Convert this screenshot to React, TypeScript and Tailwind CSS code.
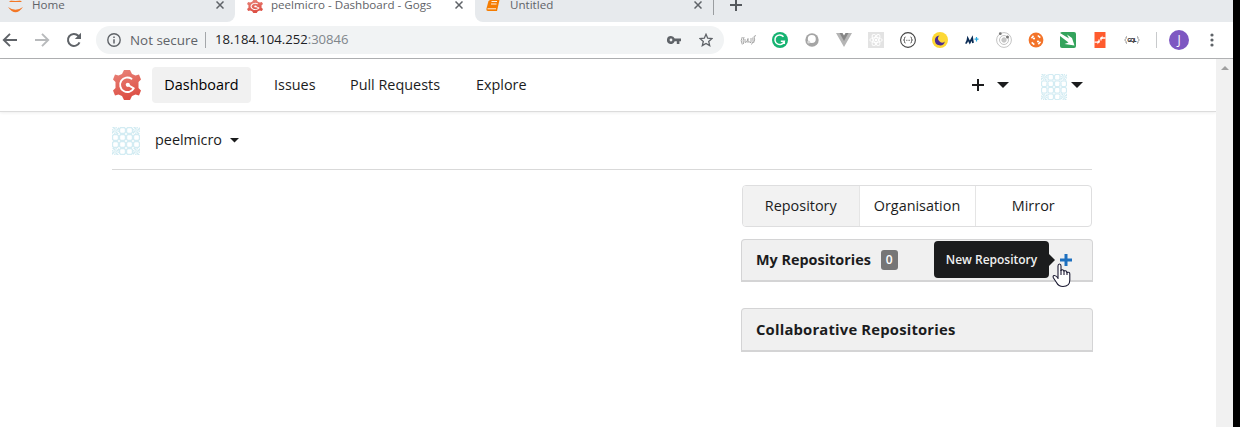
import React from "react";

const stroke = { fill: "none", stroke: "currentColor" } as const;

function Close() {
  return (
    <svg width="8" height="8" viewBox="0 0 8 8" className="shrink-0 text-[#5f6368]">
      <path d="M0.5 0.5L7.5 7.5M7.5 0.5L0.5 7.5" {...stroke} strokeWidth="1.5" />
    </svg>
  );
}

const GEAR =
  "M11 0H17L19 4L22.500 5.500L26 4.500L28 9.500L25.500 12V18L28 20.500L26 25.500L22.500 24.500L19 26L17 30H11L9 26L5.500 24.500L2 25.500L0 20.500L2.500 18V12L0 9.500L2 4.500L5.500 5.500L9 4Z";

function Gogs({ width, height }: { width: number; height: number }) {
  return (
    <svg width={width} height={height} viewBox="0 0 28 30" preserveAspectRatio="none" className="shrink-0">
      <defs>
        <linearGradient id="gear" x1="0" y1="0" x2="0.3" y2="1">
          <stop offset="0" stopColor="#e9857b" />
          <stop offset="1" stopColor="#dd5045" />
        </linearGradient>
      </defs>
      <path d={GEAR} fill="url(#gear)" />
      <path d="M18.500 8.700A7.300 7.300 0 1 0 20.800 18.300L15 15" fill="none" stroke="#fff" strokeWidth="1.900" strokeLinecap="round" strokeLinejoin="round" />
      <circle cx="14.800" cy="14.800" r="2.100" fill="#fff" />
    </svg>
  );
}

function Identicon({ size }: { size: number }) {
  const cells = [0, 1, 2, 3];
  return (
    <svg width={size} height={size} viewBox="0 0 28 28" className="shrink-0">
      {cells.map((r) =>
        cells.map((c) => {
          const corner = (r === 0 || r === 3) && (c === 0 || c === 3);
          return (
            <g key={`${r}-${c}`} transform={`translate(${c * 7} ${r * 7})`}>
              {corner ? (
                <path d="M0 0H2.500L3.500 3.500ZM7 0V2.500L3.500 3.500ZM7 7H4.500L3.500 3.500ZM0 7V4.500L3.500 3.500ZM3.500 0H5L3.500 3.500ZM7 3.500V5L3.500 3.500ZM3.500 7H2L3.500 3.500ZM0 3.500V2L3.500 3.500Z" fill="#cfeaf1" />
              ) : (
                <>
                  <rect width="7" height="7" fill="#d3ecf3" />
                  <path d="M2 1.200H5L5.800 2V5L5 5.800H2L1.200 5V2Z" fill="#fff" />
                  <path d="M0 0H1.300L0 1.300ZM7 0V1.300L5.700 0ZM7 7H5.700L7 5.700ZM0 7V5.700L1.300 7Z" fill="#fff" />
                </>
              )}
            </g>
          );
        })
      )}
    </svg>
  );
}

function Caret({ width = 12 }: { width?: number }) {
  return (
    <svg width={width} height={width / 2} viewBox="0 0 12 6" className="shrink-0">
      <path d="M0 0H12L6 6Z" fill="#1b1c1d" />
    </svg>
  );
}

function Toolbar() {
  return (
    <div className="flex h-9 items-center bg-white text-[#5f6368]">
      <svg width="18" height="16" viewBox="0 0 18 16" className="shrink-0">
        <path d="M17 8H4M10 1.800L3.800 8L10 14.200" {...stroke} strokeWidth="1.900" />
      </svg>
      <svg width="16" height="16" viewBox="0 0 16 16" className="ml-[16px] shrink-0 text-[#b8babc]">
        <path d="M1 8H14M8 1.800L14.200 8L8 14.200" {...stroke} strokeWidth="1.900" />
      </svg>
      <svg width="16" height="16" viewBox="0 0 16 16" className="ml-4 shrink-0">
        <path d="M13.500 10.300A6 6 0 1 1 12.300 3.800L14 5.500" {...stroke} strokeWidth="2" />
        <path d="M15 0.800V7H8.800Z" fill="currentColor" />
      </svg>
      <div className="ml-[14px] flex h-7 w-[628px] shrink-0 items-center rounded-full bg-[#f1f3f4] pl-[11px] pr-[11px]">
        <svg width="14" height="14" viewBox="0 0 14 14" className="shrink-0">
          <circle cx="7" cy="7" r="6.200" {...stroke} strokeWidth="1.400" />
          <path d="M7 6.200V10.500M7 3.500V5" {...stroke} strokeWidth="1.500" />
        </svg>
        <span className="ml-[9px] w-[75px] text-[13.400px]">Not secure</span>
        <span className="h-4 w-px bg-[#a4a7aa]" />
        <span className="ml-[9px] text-[13.100px] text-[#202124]">18.184.104.252</span>
        <span className="text-[13.100px] text-[#80868b]">:30846</span>
        <svg width="14" height="8" viewBox="0 0 14 8" className="ml-auto">
          <path d="M4 0A4 4 0 1 0 7.700 5.300H9.800V8H12.400V5.300H14V2.600H7.700A4 4 0 0 0 4 0ZM4 2.600A1.400 1.400 0 1 1 4 5.400A1.400 1.400 0 1 1 4 2.600Z" fill="currentColor" fillRule="evenodd" />
        </svg>
        <svg width="14" height="14" viewBox="0 0 14 14" className="ml-[18px]">
          <path d="M7 1.300L8.700 5.200L13 5.600L9.700 8.400L10.700 12.600L7 10.400L3.300 12.600L4.300 8.400L1 5.600L5.300 5.200Z" {...stroke} strokeWidth="1.300" />
        </svg>
      </div>
      <div className="ml-4 flex shrink-0 items-center gap-4">
        <svg width="16" height="16" viewBox="0 0 16 16">
          <path d="M2.300 5Q0 8.500 2.300 12.500M4 5Q2.500 8.500 3.500 12M5 7V10.500L7 9.500L8 6.500V10.500L9.500 9M11 6V10.500H9.500M11.500 12.500Q14 10 12.800 5.500M13.500 11Q15.500 8 14 4.500L16 3.500" fill="none" stroke="#9d9d9d" strokeWidth="0.900" />
        </svg>
        <svg width="16" height="16" viewBox="0 0 16 16">
          <circle cx="8" cy="8" r="8" fill="#15b371" />
          <path d="M11.500 4.700A4.800 4.800 0 1 0 12.300 9.300H8.800M12.300 9.300V12" fill="none" stroke="#fff" strokeWidth="1.500" />
        </svg>
        <svg width="16" height="16" viewBox="0 0 16 16">
          <circle cx="8" cy="8" r="6.700" fill="#a5a5a5" />
          <circle cx="7.800" cy="7" r="4" fill="#fff" />
          <circle cx="4.700" cy="10" r="1.500" fill="#d8d8d8" />
        </svg>
        <svg width="16" height="16" viewBox="0 0 16 16">
          <path d="M0 1H4L8 8L12 1H16L8 15Z" fill="#b5b5b5" />
          <path d="M3.500 1H6.500L8 3.500L9.500 1H12.500L8 9Z" fill="#858585" />
        </svg>
        <svg width="16" height="16" viewBox="0 0 16 16">
          <path d="M0 0H16V16H0Z" fill="#e3e3e3" />
          <g fill="none" stroke="#fff" strokeWidth="0.900">
            <ellipse cx="8" cy="8" rx="6.200" ry="2.500" />
            <ellipse cx="8" cy="8" rx="6.200" ry="2.500" transform="rotate(60 8 8)" />
            <ellipse cx="8" cy="8" rx="6.200" ry="2.500" transform="rotate(120 8 8)" />
          </g>
          <circle cx="8" cy="8" r="1.300" fill="#fff" />
        </svg>
        <svg width="16" height="16" viewBox="0 0 16 16" fill="none" stroke="#454545">
          <circle cx="8" cy="8" r="7.400" strokeWidth="1.100" />
          <path d="M5.500 5Q4.300 5 4.500 6.500T3.500 8Q4.700 8 4.500 9.500T5.500 11M10.500 5Q11.700 5 11.500 6.500T12.500 8Q11.300 8 11.500 9.500T10.500 11" strokeWidth="0.900" />
          <path d="M6.300 8.300H10" strokeWidth="0.900" strokeDasharray="0.800 0.600" />
        </svg>
        <svg width="16" height="16" viewBox="0 0 16 16">
          <circle cx="8" cy="8" r="8" fill="#fdd835" />
          <path d="M7.500 3.400A5 5 0 1 0 12.800 9.400A4 4 0 0 1 7.500 3.400Z" fill="#4a2b91" />
        </svg>
        <svg width="16" height="16" viewBox="0 0 16 16">
          <path d="M1.500 11Q3 11 3.800 6.500L5.800 10.500L8.200 6L9 11" fill="none" stroke="#0b2c55" strokeWidth="1.800" />
          <path d="M12.500 5V9.500M10.500 7.200H14.500" stroke="#28a9df" strokeWidth="1.200" />
        </svg>
        <svg width="16" height="16" viewBox="0 0 16 16" fill="none" stroke="#c3c3c3">
          <circle cx="8" cy="8" r="7.400" />
          <circle cx="8" cy="8" r="4.500" />
          <circle cx="8" cy="8" r="2.200" fill="#c7c7c7" />
          <circle cx="4.300" cy="1.700" r="1.400" fill="#777" stroke="none" />
          <circle cx="11.500" cy="5" r="1.500" fill="#777" stroke="none" />
        </svg>
        <svg width="16" height="16" viewBox="0 0 16 16">
          <circle cx="8" cy="8" r="7.400" fill="#f37329" />
          <path d="M3.500 6.300L5.500 3.700M9.800 3.500L12.300 5.700M12.500 9.800L10.300 12.300M6.300 12.600L3.700 10.300" stroke="#fff" strokeWidth="1.600" />
          <circle cx="6" cy="6.500" r="1.100" fill="#fff" />
          <circle cx="10" cy="9.500" r="1.100" fill="#fff" />
        </svg>
        <svg width="16" height="16" viewBox="0 0 16 16">
          <rect width="16" height="16" rx="2" fill="#34a35c" />
          <path d="M0 1L9 6.500L7 2.500L12 6L14.500 13.500L4.500 12L8.500 10.500L0 4Z" fill="#fff" />
        </svg>
        <svg width="16" height="16" viewBox="0 0 16 16">
          <path d="M2.500 0H13.500V16H2.500Z" fill="#ff5b2e" />
          <path d="M13.500 6H9V8.500M2.500 10.200H7V7.500" fill="none" stroke="#fff" strokeWidth="1.300" />
          <path d="M8 7L10.500 3.500V7ZM8 9L5.500 12.500V9Z" fill="#fff" />
        </svg>
        <svg width="16" height="16" viewBox="0 0 16 16">
          <path d="M3 4.500Q1.700 4.500 2 6.500L0.700 8L2 9.500Q1.700 11.500 3 11.500M13 4.500Q14.300 4.500 14 6.500L15.300 8L14 9.500Q14.300 11.500 13 11.500" fill="none" stroke="#888" strokeWidth="0.900" />
          <text x="3.200" y="10" fontSize="5.500" fontWeight="700" fontFamily="Open Sans, sans-serif" textLength="9.500" fill="#222">GQL</text>
        </svg>
      </div>
      <span className="ml-4 h-4 w-px shrink-0 bg-[#c8cacc]" />
      <span className="ml-3 flex h-5 w-5 shrink-0 items-center justify-center rounded-full bg-[#7e57c2] text-[12px] leading-none text-white">J</span>
      <svg width="4" height="14" viewBox="0 0 4 14" className="ml-[21px] shrink-0">
        <g fill="currentColor">
          <circle cx="2" cy="2" r="1.600" />
          <circle cx="2" cy="7" r="1.600" />
          <circle cx="2" cy="12" r="1.600" />
        </g>
      </svg>
    </div>
  );
}

function Tabs() {
  return (
    <div className="flex h-[22px] bg-white text-[11.600px] leading-[10px] text-[#5f6368]">
      <div className="flex w-[235px] shrink-0 items-start rounded-br-[8px] bg-[#e7eaed] pr-[11px]">
        <svg width="17" height="13" viewBox="0 0 17 13" className="ml-[7px]">
          <path d="M2 2Q8.500 -4 15 2M1 7Q8.500 17.500 16 7Q8.500 12.500 1 7" fill="#f37726" />
          <path d="M2 1Q8.500 -1 15 1" fill="#e7eaed" />
        </svg>
        <span className="ml-2 grow">Home</span>
        <span className="pt-px"><Close /></span>
      </div>
      <div className="flex w-[240px] shrink-0 items-start bg-white pr-[12px]">
        <span className="ml-3"><Gogs width={16} height={13} /></span>
        <span className="ml-2 grow whitespace-nowrap">peelmicro - Dashboard - Gogs</span>
        <span className="pt-px"><Close /></span>
      </div>
      <div className="flex grow items-start rounded-bl-[8px] bg-[#e7eaed]">
        <svg width="14" height="12" viewBox="0 0 14 12" className="ml-[11px]">
          <path d="M4 0H13.500L11 11H2Q0 11 0.500 8.500L2.500 1Z" fill="#f57c00" />
          <path d="M5.500 1.500H11M5 4H10.500M1.500 8.800H10" stroke="#fff" strokeWidth="0.900" />
        </svg>
        <span className="ml-[10px] w-[184px]">Untitled</span>
        <span className="pt-px"><Close /></span>
        <span className="ml-[11px] h-[15px] w-px bg-[#9a9da0]" />
        <svg width="12" height="11" viewBox="0 0 12 11" className="ml-4">
          <path d="M0 5H12M6 -1V11" stroke="#55595d" strokeWidth="2" />
        </svg>
      </div>
    </div>
  );
}

export default function App() {
  return (
    <div className="flex h-[427px] w-[1240px] overflow-hidden bg-black font-['Open_Sans','Noto_Sans',sans-serif]">
      <div className="flex w-[1233px] flex-col bg-white">
        <Tabs />
        <Toolbar />
        <div className="h-px bg-[#b0b1b3]" />
        <div className="flex grow">
          <div className="flex w-[1216px] flex-col text-[14.400px] text-[#1b1c1d]">
            <nav className="flex h-[53px] shrink-0 items-center border-b border-[#dcdcdc] pl-[113px] shadow-[0_1px_3px_rgba(0,0,0,0.07)]">
              <Gogs width={28} height={30} />
              <a className="ml-[11px] flex h-9 w-[99px] items-center justify-center rounded-[4px] bg-[#f1f1f1] text-black">Dashboard</a>
              <a className="ml-[23px] w-[76px]">Issues</a>
              <a className="w-[126px]">Pull Requests</a>
              <a className="grow">Explore</a>
              <svg width="12" height="12" viewBox="0 0 12 12">
                <path d="M0 6H12M6 0V12" stroke="#1b1c1d" strokeWidth="2" />
              </svg>
              <span className="ml-[13px]"><Caret /></span>
              <span className="ml-8 pt-1"><Identicon size={26} /></span>
              <span className="mr-[133px] ml-1"><Caret /></span>
            </nav>
            <main className="ml-[112px] w-[980px]">
              <div className="flex h-[58px] items-center border-b border-[#d9d9d9]">
                <Identicon size={28} />
                <span className="ml-[15px] w-[75px] pb-0.5">peelmicro</span>
                <Caret width={9} />
              </div>
              <div className="ml-[629px] mt-[15px] w-[352px]">
                <div className="ml-px flex h-[42px] w-[350px] overflow-hidden rounded-[4px] border border-[#dededf]">
                  <a className="flex grow basis-0 items-center justify-center bg-[#f2f2f2]">Repository</a>
                  <a className="flex w-[117px] items-center justify-center border-x border-[#e5e5e5]">Organisation</a>
                  <a className="flex grow basis-0 items-center justify-center">Mirror</a>
                </div>
                <div className="relative mt-3 flex h-[43px] items-center rounded-t-[4px] border border-b-2 border-[#d4d4d5] bg-[#f0f0f0] pl-[14px] font-bold">
                  <span>My Repositories</span>
                  <span className="ml-[10px] flex h-5 w-[17px] items-center justify-center rounded-[3px] bg-[#767676] text-[12px] font-semibold text-white">0</span>
                  <svg width="12" height="12" viewBox="0 0 12 12" className="mr-[20px] ml-auto">
                    <path d="M0 6H12M6 0V12" stroke="#1e70bf" strokeWidth="3" />
                  </svg>
                  <div className="absolute top-px left-[192px] flex h-[37px] w-[115px] items-center justify-center rounded-[4px] bg-[#1b1c1d] text-[12px] font-semibold whitespace-nowrap text-[#f0f0f0]">
                    New Repository
                    <svg width="7" height="14" viewBox="0 0 7 14" className="absolute top-3 left-[114px]">
                      <path d="M0 0L7 7L0 14Z" fill="#1b1c1d" />
                    </svg>
                  </div>
                  <svg width="19" height="25" viewBox="0 0 19 25" className="absolute top-[23px] left-[310px]">
                    <path d="M6 16V3Q6 1 7.500 1T9 3V8Q9 6.500 10.500 6.800T12 8.500Q12 7.500 13.500 7.800T15 9.500Q17.800 8.500 17.800 11V17Q17.800 23.500 11 23.500Q6.500 23.500 4.500 19.500L1.500 15Q0.500 13 2 12.500T6 15Z" fill="#fff" stroke="#1c1b33" strokeWidth="1.100" />
                    <path d="M9 7V12M12 8V12M15 9V12" stroke="#1c1b33" strokeWidth="1.100" />
                  </svg>
                </div>
                <div className="mt-[26px] flex h-[44px] items-center rounded-t-[4px] border border-b-2 border-[#d4d4d5] bg-[#f0f0f0] pl-[14px] text-[14.800px] font-bold tracking-[0.190px]">Collaborative Repositories</div>
              </div>
            </main>
          </div>
          <div className="flex w-[17px] justify-center bg-[#f1f1f1] pt-[7px]">
            <svg width="8" height="4" viewBox="0 0 8 4">
              <path d="M0 4L4 0L8 4Z" fill="#a0a0a0" />
            </svg>
          </div>
        </div>
      </div>
    </div>
  );
}
